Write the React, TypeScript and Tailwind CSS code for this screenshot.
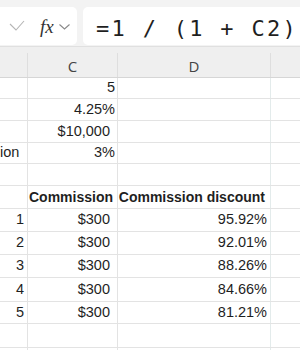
import React from 'react';

type Row = {
  h: number;
  b?: string;
  bLeft?: boolean;
  c?: string;
  cPad?: string;
  d?: string;
  bold?: boolean;
};

const rows: Row[] = [
  { h: 21, c: '5', cPad: 'pr-[2px]' },
  { h: 22, c: '4.25%', cPad: 'pr-[2px]' },
  { h: 22, c: '$10,000', cPad: 'pr-[7px]' },
  { h: 21, b: 'ion', bLeft: true, c: '3%', cPad: 'pr-[2px]' },
  { h: 22 },
  { h: 23, c: 'Commission', cPad: 'pr-[4px]', d: 'Commission discount', bold: true },
  { h: 23, b: '1', c: '$300', cPad: 'pr-[7px]', d: '95.92%' },
  { h: 23, b: '2', c: '$300', cPad: 'pr-[7px]', d: '92.01%' },
  { h: 23, b: '3', c: '$300', cPad: 'pr-[7px]', d: '88.26%' },
  { h: 24, b: '4', c: '$300', cPad: 'pr-[7px]', d: '84.66%' },
  { h: 22, b: '5', c: '$300', cPad: 'pr-[7px]', d: '81.21%' },
  { h: 24 },
  { h: 24 },
];

const App = () => {
  return (
    <div className="w-[300px] h-[350px] overflow-hidden bg-white font-['Liberation_Sans',sans-serif] text-[#1f1f1f]">
      {/* formula bar */}
      <div className="h-[47px] bg-[#f3f3f3] border-b border-[#e0e0e0] flex items-start pt-[7px] gap-[6px]">
        <div className="ml-[-12px] w-[89px] h-[38px] bg-white rounded-[5px] flex items-center shrink-0">
          <svg className="ml-[21px]" width="16" height="12" viewBox="0 0 16 12">
            <polyline points="1,4 7,10 15,1" fill="none" stroke="#b5b5b5" strokeWidth="1.1" />
          </svg>
          <span className="ml-[15px] font-['Liberation_Serif',serif] italic text-[19px] leading-none text-[#333]">
            fx
          </span>
          <svg className="ml-[5px] mt-[2px]" width="11" height="6" viewBox="0 0 11 6">
            <polyline points="0.5,0.5 5.5,5 10.5,0.5" fill="none" stroke="#8a8a8a" strokeWidth="1.1" />
          </svg>
        </div>
        <div className="flex-1 mr-[-12px] h-[38px] bg-white rounded-[5px] flex items-center pl-[13px] pt-[5px]">
          <span className="font-['DejaVu_Sans_Mono',monospace] text-[22px] tracking-[2.3px] whitespace-pre text-[#1f1f1f]">
            =1 / (1 + C2)
          </span>
        </div>
      </div>

      {/* column headers */}
      <div className="h-[31px] bg-[#efefef] border-b border-[#d6d6d6] flex items-end">
        <div className="w-[28px] h-[24px] border-r border-[#dedede] shrink-0" />
        <div className="w-[90px] h-[24px] border-r border-[#dedede] shrink-0 flex items-center justify-center text-[15px] text-[#444] font-['Open_Sans',sans-serif] pt-[3px]">
          C
        </div>
        <div className="w-[153px] h-[24px] border-r border-[#dedede] shrink-0 flex items-center justify-center text-[15px] text-[#444] font-['Open_Sans',sans-serif] pt-[3px]">
          D
        </div>
        <div className="flex-1 h-[24px]" />
      </div>

      {/* grid */}
      {rows.map((r, i) => (
        <div
          key={i}
          className={`flex border-b border-[#e3e3e3] ${r.bold ? 'font-bold text-[14px]' : 'text-[14.5px]'}`}
          style={{ height: r.h }}
        >
          <div
            className={`w-[28px] shrink-0 border-r border-[#e3e3e3] flex items-center whitespace-nowrap overflow-visible ${
              r.bLeft ? 'justify-start' : 'justify-end pr-[3px]'
            }`}
          >
            {r.b}
          </div>
          <div className={`w-[90px] shrink-0 border-r border-[#e3e3e3] flex items-center justify-end whitespace-nowrap ${r.cPad || ''}`}>
            {r.c}
          </div>
          <div
            className={`w-[153px] shrink-0 border-r border-[#e3ebeb] flex items-center justify-end whitespace-nowrap ${
              r.bold ? 'pr-[5px]' : 'pr-[3px]'
            }`}
          >
            {r.d}
          </div>
          <div className="flex-1" />
        </div>
      ))}
    </div>
  );
};

export default App;
